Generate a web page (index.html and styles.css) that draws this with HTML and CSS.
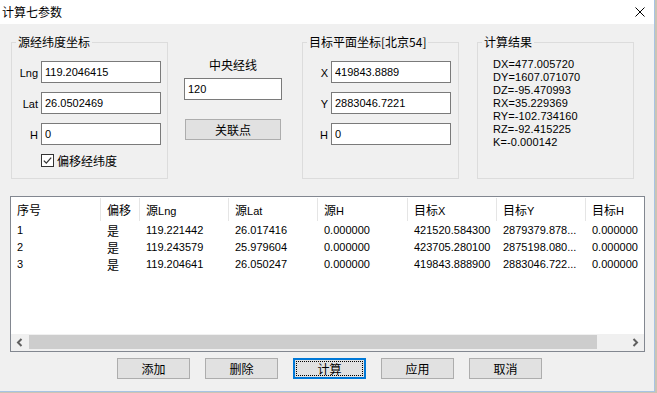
FILE: index.html
```html
<!DOCTYPE html>
<html lang="zh-CN">
<head>
    <meta charset="UTF-8">
    <title>计算七参数</title>
    <link rel="stylesheet" href="styles.css">
</head>
<body>
    <div class="window">
        <div class="titlebar">
            <span class="title">计算七参数</span>
            <svg class="close" width="10" height="10" viewBox="0 0 10 10">
                <path d="M0.5 0.5 L9.5 9.5 M9.5 0.5 L0.5 9.5" stroke="#000" stroke-width="1" fill="none"/>
            </svg>
        </div>

        <div class="top-row">
            <div class="group">
                <span class="group-title">源经纬度坐标</span>
                <div class="field"><label>Lng</label><input class="edit" value="119.2046415"></div>
                <div class="field"><label>Lat</label><input class="edit" value="26.0502469"></div>
                <div class="field"><label>H</label><input class="edit" value="0"></div>
                <div class="check">
                    <svg width="13" height="13" viewBox="0 0 13 13">
                        <rect x="0.5" y="0.5" width="12" height="12" fill="#fff" stroke="#333"/>
                        <path d="M2.8 6.6 L5.3 9.1 L10.2 3.6" stroke="#333" stroke-width="1.3" fill="none"/>
                    </svg>
                    <span class="zh">偏移经纬度</span>
                </div>
            </div>

            <div class="meridian">
                <div class="zh meridian-label">中央经线</div>
                <input class="edit edit-short" value="120">
                <button class="btn btn-wide">关联点</button>
            </div>

            <div class="group group-dst">
                <span class="group-title">目标平面坐标[北京54]</span>
                <div class="field"><label>X</label><input class="edit" value="419843.8889"></div>
                <div class="field"><label>Y</label><input class="edit" value="2883046.7221"></div>
                <div class="field"><label>H</label><input class="edit" value="0"></div>
            </div>

            <div class="group group-result">
                <span class="group-title">计算结果</span>
                <div class="results">
                    <div>DX=477.005720</div>
                    <div>DY=1607.071070</div>
                    <div>DZ=-95.470993</div>
                    <div>RX=35.229369</div>
                    <div>RY=-102.734160</div>
                    <div>RZ=-92.415225</div>
                    <div>K=-0.000142</div>
                </div>
            </div>
        </div>

        <div class="list">
            <div class="list-head">
                <div class="cell c-wide"><span class="zh">序号</span></div>
                <div class="cell c-narrow"><span class="zh">偏移</span></div>
                <div class="cell"><span class="zh">源</span>Lng</div>
                <div class="cell"><span class="zh">源</span>Lat</div>
                <div class="cell c-wide"><span class="zh">源</span>H</div>
                <div class="cell"><span class="zh">目标</span>X</div>
                <div class="cell"><span class="zh">目标</span>Y</div>
                <div class="cell"><span class="zh">目标</span>H</div>
            </div>
            <div class="list-row">
                <div class="cell c-wide">1</div>
                <div class="cell c-narrow"><span class="zh">是</span></div>
                <div class="cell">119.221442</div>
                <div class="cell">26.017416</div>
                <div class="cell c-wide">0.000000</div>
                <div class="cell">421520.584300</div>
                <div class="cell">2879379.878...</div>
                <div class="cell">0.000000</div>
            </div>
            <div class="list-row">
                <div class="cell c-wide">2</div>
                <div class="cell c-narrow"><span class="zh">是</span></div>
                <div class="cell">119.243579</div>
                <div class="cell">25.979604</div>
                <div class="cell c-wide">0.000000</div>
                <div class="cell">423705.280100</div>
                <div class="cell">2875198.080...</div>
                <div class="cell">0.000000</div>
            </div>
            <div class="list-row">
                <div class="cell c-wide">3</div>
                <div class="cell c-narrow"><span class="zh">是</span></div>
                <div class="cell">119.204641</div>
                <div class="cell">26.050247</div>
                <div class="cell c-wide">0.000000</div>
                <div class="cell">419843.888900</div>
                <div class="cell">2883046.722...</div>
                <div class="cell">0.000000</div>
            </div>
            <div class="list-fill"></div>
            <div class="hscroll">
                <span class="arrow">
                    <svg width="7" height="9" viewBox="0 0 7 9"><polyline points="5.5,1 2,4.5 5.5,8" stroke="#606060" stroke-width="2" fill="none"/></svg>
                </span>
                <div class="track"><div class="thumb"></div></div>
                <span class="arrow">
                    <svg width="7" height="9" viewBox="0 0 7 9"><polyline points="1.5,1 5,4.5 1.5,8" stroke="#606060" stroke-width="2" fill="none"/></svg>
                </span>
            </div>
        </div>

        <div class="actions">
            <button class="btn">添加</button>
            <button class="btn">删除</button>
            <button class="btn btn-default">计算</button>
            <button class="btn">应用</button>
            <button class="btn">取消</button>
        </div>
    </div>
</body>
</html>
```

FILE: styles.css
```css
body {
    margin: 0;
    width: 657px;
    height: 393px;
    overflow: hidden;
    background: #cbc4b4;
    font-family: "Liberation Sans", "Noto Sans CJK SC", sans-serif;
    font-size: 11px;
    color: #000;
}
.zh {
    font-family: "Noto Sans CJK SC", sans-serif;
    font-size: 12px;
}
.window {
    width: 654px;
    height: 391px;
    background: #f0f0f0;
    border-right: 1px solid #a7c4e4;
    border-bottom: 1px solid #a7c4e4;
}
.titlebar {
    height: 24px;
    background: #fff;
    display: flex;
    align-items: center;
    justify-content: space-between;
    padding: 0 9px 0 2px;
}
.title {
    font-family: "Noto Sans CJK SC", sans-serif;
    font-size: 12px;
    line-height: 14px;
}
.close {
    margin-top: -1px;
}
.top-row {
    display: flex;
    align-items: flex-start;
    padding: 18px 0 0 11px;
}
.group {
    position: relative;
    width: 157px;
    height: 137px;
    box-sizing: border-box;
    border: 1px solid #dcdcdc;
    padding-top: 18px;
}
.group-title {
    position: absolute;
    top: -9px;
    left: 4px;
    padding: 0 2px;
    background: #f0f0f0;
    font-family: "Noto Sans CJK SC", sans-serif;
    font-size: 12px;
    line-height: 16px;
}
.field {
    display: flex;
    align-items: center;
    height: 22px;
    margin-bottom: 9px;
}
.field label {
    width: 26px;
    margin-right: 3px;
    text-align: right;
    padding-top: 2px;
}
.group-dst .field label {
    width: 25px;
}
.edit {
    width: 120px;
    height: 22px;
    box-sizing: border-box;
    margin: 0;
    border: 1px solid #7a7a7a;
    padding: 0 3px 1px;
    background: #fff;
    font: 11px "Liberation Sans", sans-serif;
    color: #000;
    outline: none;
}
.edit-short {
    width: 98px;
}
.check {
    display: flex;
    align-items: center;
    height: 13px;
    padding-left: 29px;
}
.check .zh {
    margin-left: 3px;
    line-height: 14px;
}
.meridian {
    width: 98px;
    margin-left: 16px;
    padding-top: 15px;
    display: flex;
    flex-direction: column;
    align-items: center;
}
.meridian-label {
    line-height: 16px;
    margin-bottom: 5px;
}
.btn {
    width: 73px;
    height: 21px;
    box-sizing: border-box;
    margin: 0;
    padding: 0;
    border: 1px solid #adadad;
    background: #e1e1e1;
    color: #000;
    font-family: "Noto Sans CJK SC", sans-serif;
    font-size: 12px;
    line-height: 17px;
}
.btn-wide {
    width: 96px;
    margin-top: 19px;
}
.btn-default {
    border: 2px solid #0078d7;
    outline: 1px dotted #000;
    outline-offset: -4px;
}
.group-dst {
    margin-left: 20px;
}
.group-result {
    margin-left: 18px;
    padding-top: 0;
}
.results {
    padding: 15px 0 0 15px;
    line-height: 13px;
    letter-spacing: 0.1px;
}
.list {
    margin: 17px 0 0 10px;
    width: 635px;
    height: 156px;
    box-sizing: border-box;
    border: 1px solid #828790;
    background: #fff;
    display: flex;
    flex-direction: column;
    overflow: hidden;
}
.list-head,
.list-row {
    display: flex;
    white-space: nowrap;
}
.list-head {
    height: 25px;
}
.cell {
    flex: none;
    width: 89px;
    box-sizing: border-box;
    padding-left: 6px;
    overflow: hidden;
}
.c-wide {
    width: 90px;
}
.c-narrow {
    width: 39px;
}
.list-head .cell {
    height: 23px;
    margin-top: 1px;
    line-height: 23px;
    border-right: 1px solid #e5e5e5;
}
.list-row {
    height: 17px;
    line-height: 17px;
}
.list-fill {
    flex: 1;
}
.hscroll {
    height: 17px;
    display: flex;
    background: #f0f0f0;
}
.arrow {
    width: 17px;
    display: flex;
    align-items: center;
    justify-content: center;
}
.track {
    flex: 1;
    padding: 1px 0 2px 1px;
}
.thumb {
    width: 568px;
    height: 100%;
    background: #cdcdcd;
}
.actions {
    display: flex;
    gap: 15px;
    padding-left: 117px;
    margin-top: 6px;
}
```
